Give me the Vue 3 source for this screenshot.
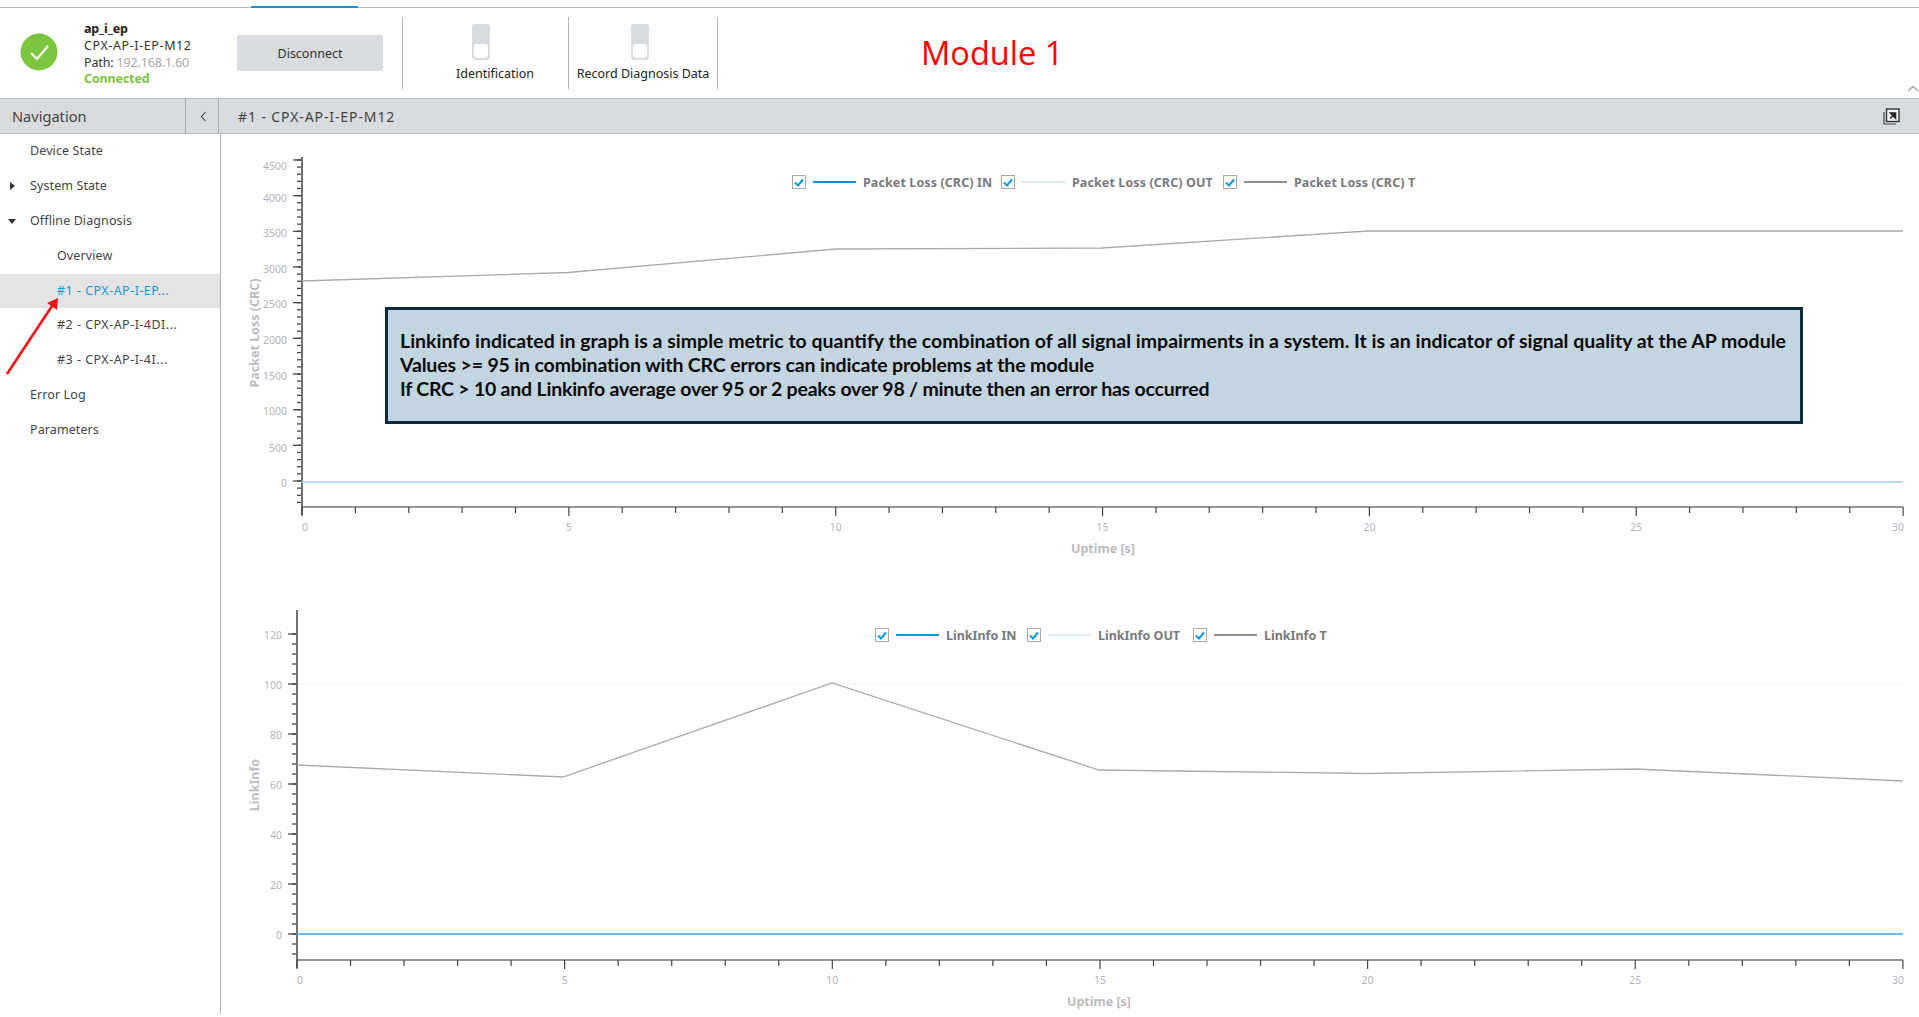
<script setup>
const nav = [
  { label: 'Device State', level: 1 },
  { label: 'System State', level: 1, caret: 'right' },
  { label: 'Offline Diagnosis', level: 1, caret: 'down' },
  { label: 'Overview', level: 2 },
  { label: '#1 - CPX-AP-I-EP...', level: 2, active: true, code: true },
  { label: '#2 - CPX-AP-I-4DI...', level: 2, code: true },
  { label: '#3 - CPX-AP-I-4I...', level: 2, code: true },
  { label: 'Error Log', level: 1 },
  { label: 'Parameters', level: 1 }
]

function range(n, f) {
  return Array.from({ length: n }, (_, i) => f(i))
}

const labelsA = [482, 447, 410, 375, 339, 303, 268, 232, 197, 165]

const chartA = {
  height: 441,
  offset: 134,
  title: 'Packet Loss (CRC)',
  titleX: 259,
  titleY: 333,
  axisX: 302,
  axisTop: 157,
  axisBottom: 507,
  endX: 1903,
  unit: 53.37,
  labelY: 531,
  xTitleX: 1103,
  xTitleY: 553,
  yLabels: range(10, (i) => ({ text: String(i * 500), y: 481 - i * 35.67, labelY: labelsA[i] })),
  yMinor: range(49, (i) => 502.4 - i * 7.134),
  grid: [],
  zero: { y: 482, color: '#b6dcf1', width: 2 },
  line: '302,281 568,272.5 836,249 1102,248 1368,231 1903,231'
}
const chartB = {
  height: 439,
  offset: 575,
  title: 'LinkInfo',
  titleX: 259,
  titleY: 785,
  axisX: 297,
  axisTop: 610,
  axisBottom: 960,
  endX: 1903,
  unit: 53.53,
  labelY: 984,
  xTitleX: 1099,
  xTitleY: 1006,
  yLabels: range(7, (i) => ({ text: String(i * 20), y: 934 - i * 50, labelY: 934 - i * 50 })),
  yMinor: range(33, (i) => 954 - i * 10),
  grid: [684],
  zero: { y: 934, color: '#3aa9e2', width: 1.6 },
  line: '297,765 563,777 832,683 1099,770 1368,773.5 1635,769 1903,781'
}

function xTicks(c) {
  return range(31, (i) => ({
    x: c.axisX + i * c.unit,
    major: i % 5 === 0,
    label: i % 5 === 0 ? String(i) : '',
    labelX: c.axisX + i * c.unit + (i === 0 ? 3 : i === 30 ? -5 : 0)
  }))
}

const charts = [
  {
    ...chartA,
    ticks: xTicks(chartA),
    legendClass: 'legend-a',
    legend: [
      { text: 'Packet Loss (CRC) IN', color: '#0f96e0', width: 128 },
      { text: 'Packet Loss (CRC) OUT', color: '#dbe9f6', width: 141 },
      { text: 'Packet Loss (CRC) T', color: '#8b8f98', width: 120 }
    ]
  },
  {
    ...chartB,
    ticks: xTicks(chartB),
    legendClass: 'legend-b',
    legend: [
      { text: 'LinkInfo IN', color: '#0f96e0', width: 69 },
      { text: 'LinkInfo OUT', color: '#dbe9f6', width: 83 },
      { text: 'LinkInfo T', color: '#8b8f98', width: 62 }
    ]
  }
]
</script>

<template>
  <div class="app">
    <div class="strip"><span class="strip-tab"></span></div>

    <header class="toolbar">
      <div class="status-icon">
        <svg width="38" height="38" viewBox="0 0 38 38">
          <circle cx="19" cy="19" r="18.5" fill="#7cc63f" />
          <path d="M11 20l6 6 11-13" fill="none" stroke="#fff" stroke-width="2.2" />
        </svg>
      </div>
      <div class="device">
        <div class="device-name">ap_i_ep</div>
        <div class="code">CPX-AP-I-EP-M12</div>
        <div>Path: <span class="ip">192.168.1.60</span></div>
        <div class="connected">Connected</div>
      </div>
      <button class="disconnect">Disconnect</button>
      <div class="tool tool-id">
        <span class="toggle"><i></i></span>
        <span class="tool-label">Identification</span>
      </div>
      <div class="tool tool-rec">
        <span class="toggle"><i></i></span>
        <span class="tool-label">Record Diagnosis Data</span>
      </div>
      <div class="module">Module 1</div>
      <svg class="collapse" width="12" height="7" viewBox="0 0 12 7">
        <path d="M1 6l5-4.5L11 6" fill="none" stroke="#666" stroke-width="1" />
      </svg>
    </header>

    <div class="titlebar">
      <div class="nav-title">Navigation</div>
      <div class="nav-toggle">
        <svg width="7" height="11" viewBox="0 0 7 11">
          <path d="M5.5 1L1.5 5.5l4 4.5" fill="none" stroke="#444" stroke-width="1.1" />
        </svg>
      </div>
      <div class="page-title">#1 - CPX-AP-I-EP-M12</div>
      <svg class="popout" width="17" height="17" viewBox="0 0 17 17">
        <path d="M1 4v12h12" fill="none" stroke="#444" stroke-width="1.2" />
        <rect x="3.5" y="1" width="12.5" height="12.5" fill="#f4f5f6" stroke="#333" stroke-width="1.4" />
        <path d="M7 10.5l4.5-4.5M7.5 5h5v5z" fill="#222" stroke="#222" stroke-width="1.6" />
      </svg>
    </div>

    <div class="body">
      <aside class="sidebar">
        <div
          v-for="item in nav"
          :key="item.label"
          class="nav-item"
          :class="['level-' + item.level, { active: item.active, code: item.code }]"
        >
          <span v-if="item.caret" class="caret" :class="item.caret"></span>
          {{ item.label }}
        </div>
        <svg class="arrow" width="60" height="84" viewBox="0 0 60 84">
          <path d="M7 76L52 8" stroke="#f01414" stroke-width="2.6" fill="none" />
          <path d="M58 0L47 5l10 7z" fill="#f01414" />
        </svg>
      </aside>

      <main class="main">
        <section
          v-for="c in charts"
          :key="c.title"
          class="chart"
          :style="{ height: c.height + 'px' }"
        >
          <svg
            class="plot"
            width="1698"
            :height="c.height"
            :viewBox="`221 ${c.offset} 1698 ${c.height}`"
          >
            <line
              v-for="y in c.grid"
              :key="y"
              :x1="c.axisX"
              :x2="c.endX"
              :y1="y"
              :y2="y"
              stroke="#eef0ee"
            />
            <line
              v-for="y in c.yMinor"
              :key="y"
              :x1="c.axisX - 5"
              :x2="c.axisX"
              :y1="y"
              :y2="y"
              stroke="#444"
              stroke-width="1.3"
            />
            <g v-for="l in c.yLabels" :key="l.text">
              <line :x1="c.axisX - 9" :x2="c.axisX" :y1="l.y" :y2="l.y" stroke="#444" stroke-width="1.3" />
              <text :x="c.axisX - 15" :y="l.labelY + 4.5" class="tick-label" text-anchor="end">{{ l.text }}</text>
            </g>
            <line :x1="c.axisX" :x2="c.axisX" :y1="c.axisTop" :y2="c.axisBottom + 8" stroke="#707070" stroke-width="2" />
            <line :x1="c.axisX" :x2="c.endX" :y1="c.axisBottom" :y2="c.axisBottom" stroke="#707070" stroke-width="1.6" />
            <g v-for="t in c.ticks" :key="t.x">
              <line :x1="t.x" :x2="t.x" :y1="c.axisBottom" :y2="c.axisBottom + (t.major ? 9 : 6)" stroke="#444" stroke-width="1.2" />
              <text v-if="t.label" :x="t.labelX" :y="c.labelY" class="tick-label" text-anchor="middle">{{ t.label }}</text>
            </g>
            <line :x1="c.axisX" :x2="c.endX" :y1="c.zero.y" :y2="c.zero.y" :stroke="c.zero.color" :stroke-width="c.zero.width" />
            <polyline :points="c.line" fill="none" stroke="#b0a8b0" stroke-width="1.3" />
            <text
              class="axis-title"
              text-anchor="middle"
              :transform="`translate(${c.titleX} ${c.titleY}) rotate(-90)`"
            >{{ c.title }}</text>
            <text class="axis-title" :x="c.xTitleX" :y="c.xTitleY" text-anchor="middle">Uptime [s]</text>
          </svg>
          <div class="legend" :class="c.legendClass">
            <div v-for="l in c.legend" :key="l.text" class="legend-item">
              <span class="check">
                <svg width="10" height="9" viewBox="0 0 10 9">
                  <path d="M1 4.5l3 3 5-6" fill="none" stroke="#0f96e0" stroke-width="2" />
                </svg>
              </span>
              <span class="swatch" :style="{ background: l.color }"></span>
              <span class="legend-text" :style="{ width: l.width + 'px' }">{{ l.text }}</span>
            </div>
          </div>
        </section>

        <div class="note">
          <div>Linkinfo indicated in graph is a simple metric to quantify the combination of all signal impairments in a system. It is an indicator of signal quality at the AP module</div>
          <div class="note-2">Values &gt;= 95 in combination with CRC errors can indicate problems at the module</div>
          <div class="note-3">If CRC &gt; 10 and Linkinfo average over 95 or 2 peaks over 98 / minute then an error has occurred</div>
        </div>
      </main>
    </div>
    <div class="footer"></div>
  </div>
</template>

<style>
html, body { margin: 0; background: #fff; overflow: hidden; }
</style>

<style scoped>
.app {
  width: 1919px;
  height: 1017px;
  display: flex;
  flex-direction: column;
  overflow: hidden;
  font-family: "Noto Sans", "Open Sans", sans-serif;
  color: #333;
  background: #fff;
}
.strip {
  height: 8px;
  flex: none;
  box-sizing: border-box;
  border-bottom: 1px solid #b4b8bc;
  display: flex;
  align-items: flex-end;
  padding-left: 251px;
}
.strip-tab { width: 107px; height: 2px; background: #1296db; margin-bottom: -1px; }
.toolbar {
  height: 90px;
  flex: none;
  position: relative;
  display: flex;
  align-items: center;
}
.status-icon { width: 38px; height: 38px; margin-left: 20px; margin-top: -2px; }
.device {
  margin-left: 26px;
  width: 153px;
  font-size: 12.5px;
  line-height: 16.7px;
  letter-spacing: -0.15px;
  margin-top: 3px;
}
.device .code { letter-spacing: 0.6px; }
.device-name { font-weight: 700; color: #222; }
.ip { color: #a8a8a8; }
.connected { color: #7cc63f; font-weight: 700; }
.disconnect {
  width: 146px;
  height: 36px;
  border: 0;
  border-radius: 2px;
  background: #d8dbe0;
  color: #333;
  font: 12.5px "Noto Sans", sans-serif;
  padding: 0;
}
.tool {
  align-self: flex-start;
  margin-top: 9px;
  height: 72px;
  box-sizing: border-box;
  display: flex;
  flex-direction: column;
  align-items: center;
  border-left: 1px solid #b0b4b8;
  padding-top: 7px;
}
.tool-id { margin-left: 19px; width: 166px; }
.tool-rec { width: 150px; border-right: 1px solid #b0b4b8; }
.tool-id .toggle { margin-right: 10px; }
.tool-id .tool-label { margin-left: 19px; }
.tool-rec .toggle { margin-right: 7px; }
.toggle {
  width: 18px;
  height: 36px;
  background: #d8dbe0;
  border-radius: 3px;
  display: flex;
  align-items: flex-end;
  justify-content: center;
  padding-bottom: 2px;
  box-sizing: border-box;
}
.toggle i {
  width: 14px;
  height: 14px;
  background: #fff;
  border-radius: 3px;
  display: block;
}
.tool-label { font-size: 12.5px; margin-top: 5px; color: #222; white-space: nowrap; }
.module {
  margin-left: 203px;
  margin-top: -2px;
  color: #f00;
  font-family: "Open Sans", sans-serif;
  font-size: 32.6px;
  white-space: nowrap;
}
.collapse { position: absolute; right: 0; bottom: 6px; }
.titlebar {
  height: 36px;
  flex: none;
  box-sizing: border-box;
  background: #d8dbdf;
  border-top: 1px solid #b4b8bc;
  border-bottom: 1px solid #b4b8bc;
  display: flex;
  align-items: center;
  font-size: 14px;
  color: #444;
}
.nav-title { width: 186px; height: 100%; box-sizing: border-box; padding: 7px 0 0 12px; border-right: 1px solid #a8acb0; font-size: 14.6px; }
.nav-toggle { width: 33px; height: 100%; box-sizing: border-box; padding-left: 2px; border-right: 1px solid #a8acb0; display: flex; align-items: center; justify-content: center; }
.page-title { margin-left: 19px; flex: 1; letter-spacing: 0.9px; }
.popout { margin-right: 19px; }
.body { height: 880px; flex: none; display: flex; min-height: 0; }
.footer { flex: 1; }
.sidebar {
  width: 221px;
  flex: none;
  box-sizing: border-box;
  border-right: 1px solid #b0b4b8;
  padding-top: 0;
  position: relative;
  font-size: 12.5px;
  color: #444;
}
.nav-item {
  height: 34.9px;
  line-height: 33px;
  position: relative;
  letter-spacing: 0.1px;
}
.nav-item.code { letter-spacing: 0.48px; }
.level-1 { padding-left: 30px; }
.level-2 { padding-left: 57px; }
.active { background: #e4e4e4; color: #1a94dc; }
.caret { position: absolute; width: 0; height: 0; }
.caret.right { left: 10px; top: 13px; border-left: 5px solid #333; border-top: 4px solid transparent; border-bottom: 4px solid transparent; }
.caret.down { left: 8px; top: 15px; border-top: 5px solid #333; border-left: 4px solid transparent; border-right: 4px solid transparent; }
.arrow { position: absolute; left: 0; top: 164px; }
.main { flex: 1; position: relative; }
.chart { position: relative; }
.plot { display: block; }
.tick-label { font-size: 10.5px; fill: #b4b4b8; font-family: "Noto Sans", sans-serif; }
.axis-title { font-size: 12.5px; font-weight: 700; fill: #bcbcc0; font-family: "Noto Sans", sans-serif; }
.legend { position: absolute; display: flex; font-size: 12.5px; font-weight: 700; color: #77797e; }
.legend-a { left: 571px; top: 41px; gap: 10px; letter-spacing: 0.1px; }
.legend-b { left: 654px; top: 53px; gap: 12px; }
.legend-item { display: flex; align-items: center; height: 14px; }
.check {
  width: 14px;
  height: 14px;
  box-sizing: border-box;
  border: 1px solid #a8a8a8;
  display: flex;
  align-items: center;
  justify-content: center;
}
.swatch { width: 43px; height: 2px; margin: 0 7px; }
.legend-text { white-space: nowrap; }
.note {
  position: absolute;
  left: 164px;
  top: 173px;
  width: 1418px;
  height: 117px;
  box-sizing: border-box;
  border: 3px solid #0c2a3c;
  background: #c3d5e0;
  padding: 19px 12px 0;
  font-family: "Lato", sans-serif;
  font-weight: 700;
  font-size: 19.5px;
  line-height: 24px;
  color: #0a0a0a;
  white-space: nowrap;
}
.note-2 { letter-spacing: -0.15px; }
.note-3 { letter-spacing: -0.21px; }
</style>
